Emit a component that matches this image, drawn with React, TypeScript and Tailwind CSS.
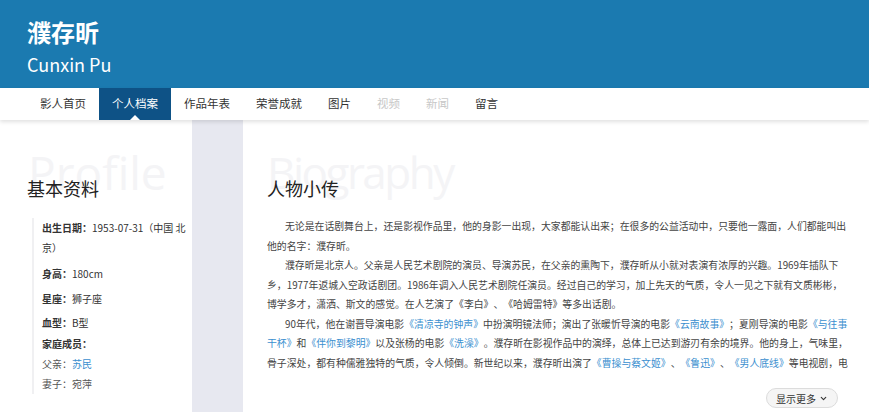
import React from "react";
import { ChevronDown } from "lucide-react";

const FONT = { fontFamily: '"Noto Sans CJK SC", "Noto Sans", sans-serif' };

const navItems = [
  { label: "影人首页", active: false, disabled: false },
  { label: "个人档案", active: true, disabled: false },
  { label: "作品年表", active: false, disabled: false },
  { label: "荣誉成就", active: false, disabled: false },
  { label: "图片", active: false, disabled: false },
  { label: "视频", active: false, disabled: true },
  { label: "新闻", active: false, disabled: true },
  { label: "留言", active: false, disabled: false },
];

function L({ children }: { children: React.ReactNode }) {
  return <a className="text-[#3b8fcf]">{children}</a>;
}

export default function App() {
  return (
    <div className="w-[869px] h-[412px] overflow-hidden bg-white text-[#333]" style={FONT}>
      {/* Header */}
      <div className="h-[88px] bg-[#1b7ab0] pl-[27px] pt-[16px] text-white">
        <div className="text-[24px] font-bold leading-[32px]">濮存昕</div>
        <div className="text-[18px] leading-[26px] mt-[3px]">Cunxin Pu</div>
      </div>

      {/* Nav */}
      <div className="relative z-10 h-[32px] bg-white pl-[27px] flex items-stretch shadow-[0_2px_4px_rgba(0,0,0,0.12)]">
        {navItems.map((it) => (
          <div
            key={it.label}
            className={
              it.active
                ? "relative px-[13px] flex items-center text-[11.5px] bg-[#0e5286] text-white"
                : it.disabled
                ? "px-[13px] flex items-center text-[11.5px] text-[#c8c8c8]"
                : "px-[13px] flex items-center text-[11.5px] text-[#333]"
            }
          >
            {it.label}
            {it.active && (
              <span className="absolute bottom-0 left-1/2 -translate-x-1/2 w-0 h-0 border-l-[5px] border-r-[5px] border-b-[5px] border-l-transparent border-r-transparent border-b-white" />
            )}
          </div>
        ))}
      </div>

      {/* Body */}
      <div className="flex h-[292px] bg-[#e7e8f0]">
        {/* Left */}
        <div className="relative w-[192px] bg-white pl-[27px] pt-[56px]">
          <div
            className="absolute left-[28px] top-[22px] text-[46px] leading-[60px] text-[#f4f4f6] select-none"
            style={{ fontFamily: '"Open Sans", sans-serif' }}
          >
            Profile
          </div>
          <div className="relative text-[18px] leading-[24px] text-[#222]">基本资料</div>
          <div className="relative mt-[18px] ml-[5px] border-l-2 border-[#f0f0f2] pl-[8px] pr-[6px] text-[10px] leading-[20px]">
            <div className="mb-[6px]">
              <span className="font-bold">出生日期：</span>1953-07-31（中国 北京）
            </div>
            <div className="mb-[5px]">
              <span className="font-bold">身高：</span>180cm
            </div>
            <div className="mb-[4px]">
              <span className="font-bold">星座：</span>狮子座
            </div>
            <div className="mb-[1px]">
              <span className="font-bold">血型：</span>B型
            </div>
            <div>
              <span className="font-bold">家庭成员：</span>
            </div>
            <div className="text-[#555]">
              父亲：<L>苏民</L>
            </div>
            <div className="text-[#555]">妻子：宛萍</div>
          </div>
        </div>

        {/* Gap strip */}
        <div className="w-[51px]" />

        {/* Right */}
        <div className="relative flex-1 bg-white pl-[24px] pr-[18px] pt-[56px]">
          <div
            className="absolute left-[24px] top-[22px] text-[44px] leading-[60px] tracking-[-2.5px] text-[#f4f4f6] select-none"
            style={{ fontFamily: '"Open Sans", sans-serif' }}
          >
            Biography
          </div>
          <div className="relative text-[18px] leading-[24px] text-[#222]">人物小传</div>
          <div className="relative mt-[17px] h-[156px] overflow-hidden text-[9.85px] leading-[19.5px] text-[#444] [text-spacing-trim:space-all]">
            <p className="indent-[18px]">
              无论是在话剧舞台上，还是影视作品里，他的身影一出现，大家都能认出来；在很多的公益活动中，只要他一露面，人们都能叫出他的名字：濮存昕。
            </p>
            <p className="indent-[18px]">
              濮存昕是北京人。父亲是人民艺术剧院的演员、导演苏民，在父亲的熏陶下，濮存昕从小就对表演有浓厚的兴趣。1969年插队下乡，1977年返城入空政话剧团。1986年调入人民艺术剧院任演员。经过自己的学习，加上先天的气质，令人一见之下就有文质彬彬，博学多才，潇洒、斯文的感觉。在人艺演了《李白》、《哈姆雷特》等多出话剧。
            </p>
            <p className="indent-[18px]">
              90年代，他在谢晋导演电影<L>《清凉寺的钟声》</L>中扮演明镜法师；演出了张暖忻导演的电影<L>《云南故事》</L>；夏刚导演的电影<L>《与往事干杯》</L>和<L>《伴你到黎明》</L>以及张杨的电影<L>《洗澡》</L>。濮存昕在影视作品中的演绎，总体上已达到游刃有余的境界。他的身上，气味里，骨子深处，都有种儒雅独特的气质，令人倾倒。新世纪以来，濮存昕出演了<L>《曹操与蔡文姬》</L>、<L>《鲁迅》</L>、<L>《男人底线》</L>等电视剧，电影<L>《一轮明月》</L>、<L>《最爱》</L>等。
            </p>
          </div>
          <div className="flex justify-end mt-[15px] mr-[13px]">
            <button className="flex items-center gap-[3px] h-[20px] px-[9px] rounded-full border border-[#dcdcdc] bg-[#f5f5f5] text-[10px] text-[#333]">
              显示更多
              <ChevronDown size={9} strokeWidth={3} />
            </button>
          </div>
        </div>
      </div>
    </div>
  );
}
